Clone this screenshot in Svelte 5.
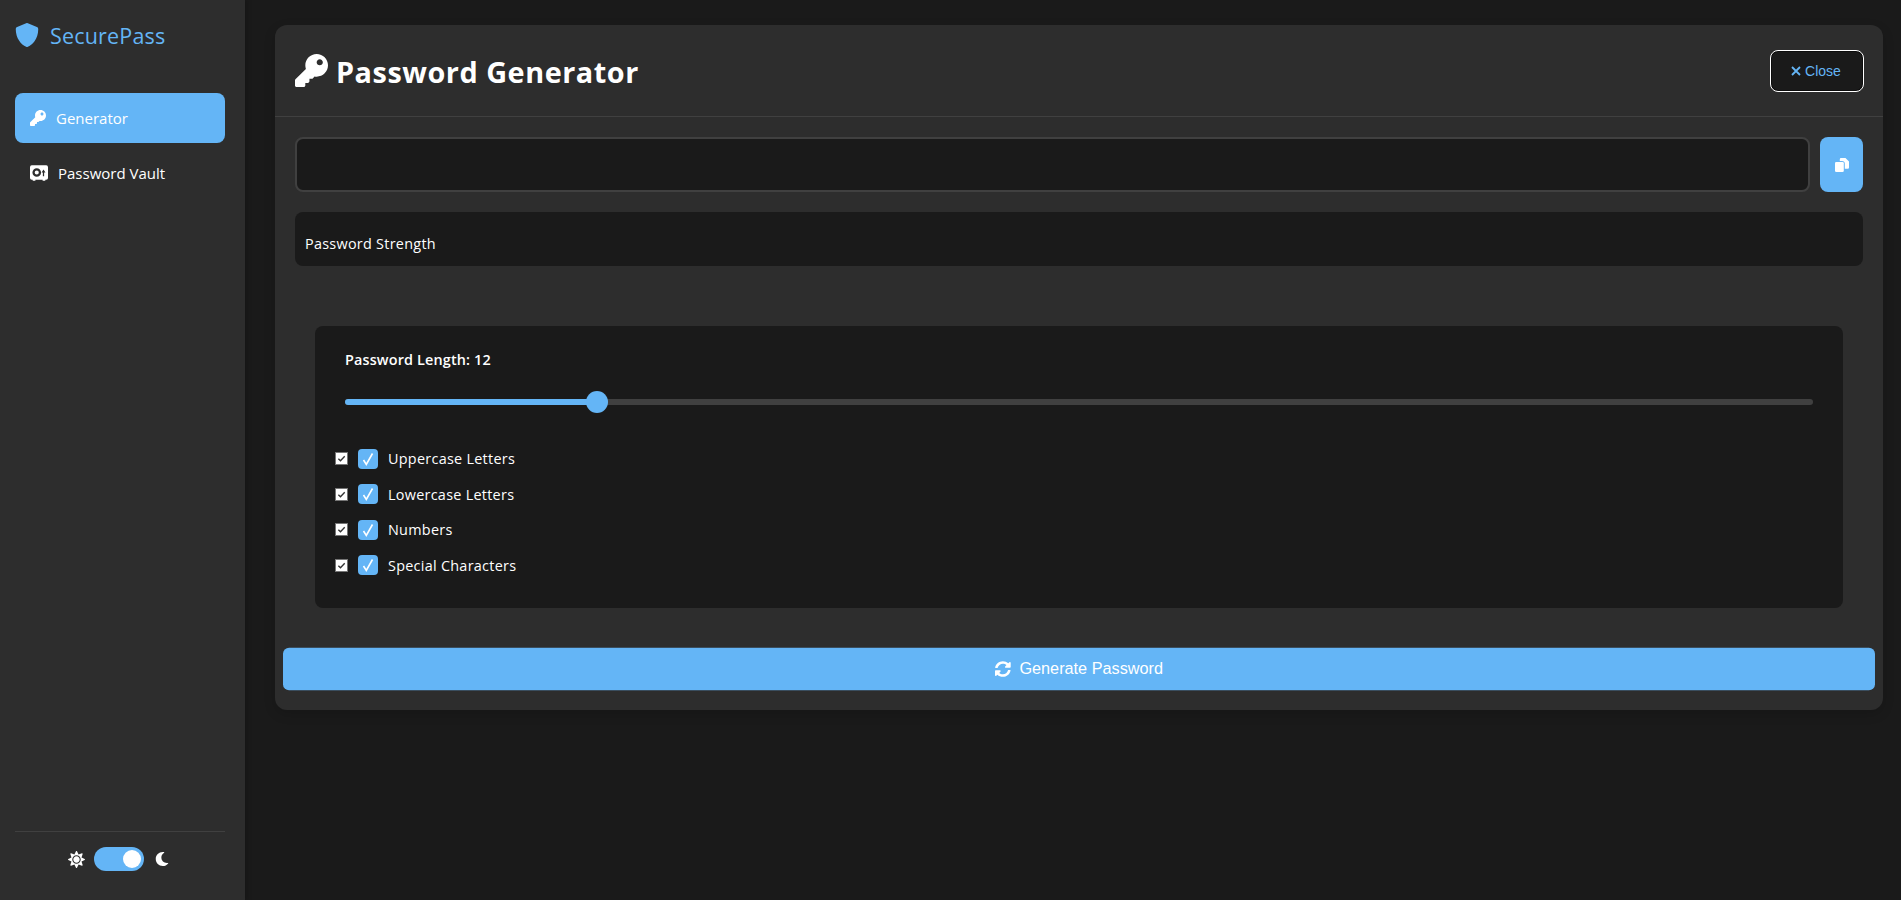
<script>
  const sections = ['Uppercase Letters', 'Lowercase Letters', 'Numbers', 'Special Characters'];
  const key = 'M512 176.001C512 273.203 433.202 352 336 352c-11.22 0-22.19-1.062-32.827-3.069l-24.012 27.014A23.999 23.999 0 0 1 261.223 384H224v40c0 13.255-10.745 24-24 24h-40v40c0 13.255-10.745 24-24 24H24c-13.255 0-24-10.745-24-24v-78.059c0-6.365 2.529-12.47 7.029-16.971l161.802-161.802C163.108 213.814 160 195.271 160 176 160 78.798 238.797.001 335.999 0 433.488-.001 512 78.511 512 176.001zM336 128c0 26.51 21.49 48 48 48s48-21.49 48-48-21.49-48-48-48-48 21.49-48 48z';
</script>

<div class="layout">
  <aside class="sidebar">
    <div class="logo">
      <svg class="shield" viewBox="0 0 512 512"><path d="M466.5 83.7l-192-80a48.15 48.15 0 0 0-36.9 0l-192 80C27.7 91.1 16 108.6 16 128c0 198.5 114.5 335.7 221.5 380.3 11.8 4.9 25.1 4.9 36.9 0C360.1 472.6 496 349.3 496 128c0-19.4-11.7-36.9-29.5-44.3z"/></svg>
      <span>SecurePass</span>
    </div>
    <nav class="nav">
      <div class="nav-item active">
        <svg class="nav-icon" viewBox="0 0 512 512"><path d={key}/></svg>
        <span>Generator</span>
      </div>
      <div class="nav-item">
        <svg class="vault-icon" viewBox="0 0 20 17">
          <path fill-rule="evenodd" d="M2 0h16a2 2 0 0 1 2 2v12a2 2 0 0 1-2 2h-1v1h-3v-1H6v1H3v-1H2a2 2 0 0 1-2-2V2a2 2 0 0 1 2-2zM7.5 3.2a4.8 4.8 0 1 0 0 9.6 4.8 4.8 0 0 0 0-9.600zM7.5 5.700a2.300 2.300 0 1 1 0 4.600 2.300 2.300 0 0 1 0-4.600zM15 4.500 12.800 8H14.300v4h1.400V8h1.500z"/>
        </svg>
        <span>Password Vault</span>
      </div>
    </nav>
    <div class="theme">
      <svg class="sun" viewBox="0 0 512 512"><path d="M256 160c-52.9 0-96 43.1-96 96s43.1 96 96 96 96-43.1 96-96-43.1-96-96-96zm246.4 80.5l-94.7-47.3 33.5-100.4c4.5-13.6-8.4-26.5-21.9-21.9l-100.4 33.5-47.4-94.8c-6.4-12.8-24.6-12.8-31 0l-47.3 94.7L92.7 70.8c-13.6-4.5-26.5 8.4-21.9 21.9l33.5 100.4-94.7 47.4c-12.8 6.4-12.8 24.6 0 31l94.7 47.3-33.5 100.5c-4.5 13.6 8.4 26.5 21.9 21.9l100.4-33.5 47.3 94.7c6.4 12.8 24.600 12.8 31 0l47.3-94.7 100.4 33.5c13.6 4.5 26.5-8.4 21.9-21.9l-33.5-100.4 94.7-47.3c13-6.5 13-24.7.2-31.100zm-155.900 106c-49.900 49.900-131.100 49.900-181 0-49.900-49.900-49.900-131.100 0-181 49.900-49.900 131.100-49.900 181 0 49.900 49.900 49.900 131.100 0 181z"/></svg>
      <div class="toggle"><div class="knob"></div></div>
      <svg class="moon" viewBox="0 0 512 512"><path d="M283.211 512c78.962 0 151.079-35.925 198.857-94.792 7.068-8.708-.639-21.43-11.562-19.35-124.203 23.654-238.262-71.576-238.262-196.954 0-72.222 38.662-138.635 101.498-174.394 9.686-5.512 7.25-20.197-3.756-22.23A258.156 258.156 0 0 0 283.211 0c-141.309 0-256 114.511-256 256 0 141.309 114.511 256 256 256z"/></svg>
    </div>
  </aside>

  <main class="main">
    <section class="card">
      <header class="card-head">
        <h1><svg class="title-icon" viewBox="0 0 512 512"><path d={key}/></svg><span class="title-text">Password Generator</span></h1>
        <button class="close">
          <svg class="x" viewBox="0 0 10 10"><path d="M1 1 9 9M9 1 1 9"/></svg>
          Close
        </button>
      </header>
      <div class="body">
        <div class="output-row">
          <div class="output"></div>
          <button class="copy" aria-label="Copy">
            <svg class="copy-icon" viewBox="0 0 14 14">
              <path d="M6 0h4.500L14 3.500V9.500a1.200 1.200 0 0 1-1.200 1.200H9.800V5.800A2.800 2.800 0 0 0 7 3H4.800V1.200A1.200 1.200 0 0 1 6 0z"/>
              <rect x="0" y="4" width="8.800" height="10" rx="1.300"/>
            </svg>
          </button>
        </div>
        <div class="strength">Password Strength</div>
        <div class="options">
          <div class="length-label">Password Length: 12</div>
          <div class="slider">
            <div class="fill"></div>
            <div class="thumb"></div>
          </div>
          <div class="checks">
            {#each sections as s}
              <label class="check">
                <span class="native">
                  <svg viewBox="0 0 13 13"><path d="M2.800 6.800 5.300 9.200 10.300 3.800" /></svg>
                </span>
                <span class="custom">
                  <svg viewBox="0 0 20 20"><path d="M5.500 11 8.300 15.500 14.500 4.500" /></svg>
                </span>
                <span class="check-text">{s}</span>
              </label>
            {/each}
          </div>
        </div>
      </div>
      <div class="gen-wrap">
        <button class="generate">
          <svg class="sync" viewBox="0 0 512 512"><path d="M370.72 133.28C339.458 104.008 298.888 87.962 255.848 88c-77.458.068-144.328 53.178-162.791 126.85-1.344 5.363-6.122 9.15-11.651 9.15H24.103c-7.498 0-13.194-6.807-11.807-14.176C33.933 94.924 134.813 8 256 8c66.448 0 126.791 26.136 171.315 68.685L463.03 40.97C478.149 25.851 504 36.559 504 57.941V192c0 13.255-10.745 24-24 24H345.941c-21.382 0-32.09-25.851-16.971-40.971l41.75-41.749zM32 296h134.059c21.382 0 32.09 25.851 16.971 40.971l-41.75 41.75c31.262 29.273 71.835 45.319 114.876 45.28 77.418-.07 144.315-53.144 162.787-126.849 1.344-5.363 6.122-9.15 11.651-9.15h57.304c7.498 0 13.194 6.807 11.807 14.176C478.067 417.076 377.187 504 256 504c-66.448 0-126.791-26.136-171.315-68.685L48.97 471.03C33.851 486.149 8 475.441 8 454.059V320c0-13.255 10.745-24 24-24z"/></svg>
          Generate Password
        </button>
      </div>
    </section>
  </main>
</div>

<style>
  :global(body) {
    margin: 0;
    background: #1a1a1a;
    font-family: "Open Sans", "Noto Sans", sans-serif;
    color: #fff;
  }
  svg { fill: currentColor; display: block; flex: none; }
  .layout { display: flex; height: 900px; overflow: hidden; }
  .sidebar {
    width: 245px;
    flex: none;
    box-sizing: border-box;
    padding: 0 20px 29px 15px;
    background: #2d2d2d;
    display: flex;
    flex-direction: column;
    box-shadow: 2px 0 5px rgba(0, 0, 0, .2);
  }
  .logo {
    display: flex;
    align-items: center;
    gap: 11px;
    height: 71px;
    color: #64b5f6;
    font-size: 21.500px;
    letter-spacing: .18px;
  }
  .shield { width: 24px; height: 24px; margin-bottom: 2px; }
  .nav { margin-top: 22px; display: flex; flex-direction: column; gap: 5px; }
  .nav-item {
    display: flex;
    align-items: center;
    height: 50px;
    padding: 0 15px;
    border-radius: 8px;
    font-size: 15px;
    gap: 10px;
  }
  .active { background: #64b5f6; }
  .nav-icon { width: 16px; height: 16px; }
  .vault-icon { width: 18px; height: 16px; }
  .theme {
    margin-top: auto;
    border-top: 1px solid #404040;
    padding: 15px 3px 0 0;
    display: flex;
    align-items: center;
    justify-content: center;
    gap: 9px;
  }
  .sun { width: 17px; height: 17px; }
  .moon { width: 14px; height: 14px; margin-left: 2px; }
  .toggle {
    width: 50px;
    height: 24px;
    border-radius: 12px;
    background: #64b5f6;
    display: flex;
    align-items: center;
    justify-content: flex-end;
    padding: 0 3px;
    box-sizing: border-box;
  }
  .knob { width: 18px; height: 18px; border-radius: 50%; background: #fff; }
  .main { flex: 1; padding: 25px 18px 0 30px; min-width: 0; }
  .card {
    background: #2d2d2d;
    border-radius: 12px;
    padding-bottom: 19.800px;
    box-shadow: 0 4px 12px rgba(0, 0, 0, .15);
  }
  .card-head {
    height: 92px;
    box-sizing: border-box;
    border-bottom: 1px solid #404040;
    padding: 0 19px 0 20px;
    display: flex;
    align-items: center;
    justify-content: space-between;
  }
  h1 {
    margin: 0;
    font-size: 28.800px;
    font-weight: 700;
    letter-spacing: .54px;
    display: flex;
    align-items: center;
    gap: 8px;
  }
  .title-icon { width: 33px; height: 33px; }
  .title-text { padding-top: 2px; }
  .close {
    width: 94px;
    height: 42px;
    box-sizing: border-box;
    background: #1a1a1a;
    color: #64b5f6;
    border: 1px solid #fff;
    box-shadow: inset 0 0 0 1px #0d0d0d;
    border-radius: 8px;
    font: 14px "Liberation Sans", Arial, sans-serif;
    display: flex;
    align-items: center;
    justify-content: center;
    gap: 4px;
    padding: 0 2px 0 0;
  }
  .x { width: 10px; height: 10px; fill: none; stroke: currentColor; stroke-width: 1.800; }
  .body { padding: 20px 20px 0; }
  .output-row { display: flex; gap: 10px; }
  .output {
    flex: 1;
    height: 55px;
    box-sizing: border-box;
    background: #1a1a1a;
    border: 2px solid #404040;
    border-radius: 8px;
  }
  .copy {
    width: 43px;
    height: 55px;
    background: #64b5f6;
    color: #fff;
    border: 0;
    border-radius: 8px;
    padding: 0;
    display: flex;
    align-items: center;
    justify-content: center;
  }
  .copy-icon { width: 14px; height: 14px; }
  .strength {
    margin-top: 20px;
    height: 54px;
    box-sizing: border-box;
    background: #1a1a1a;
    border-radius: 8px;
    padding: 21px 10px 0;
    font-size: 14.400px;
    letter-spacing: .28px;
    line-height: 21px;
  }
  .options {
    margin: 60px 20px 0;
    padding: 24px 30px 32px 20px;
    background: #1a1a1a;
    border-radius: 8px;
  }
  .length-label {
    font-size: 14.400px;
    font-weight: 600;
    letter-spacing: .16px;
    line-height: 20px;
    padding-left: 10px;
  }
  .slider {
    position: relative;
    height: 6px;
    margin: 29px 0 0 10px;
    background: #404040;
    border-radius: 3px;
  }
  .fill { width: 252px; height: 6px; background: #64b5f6; border-radius: 3px; }
  .thumb {
    position: absolute;
    left: 241px;
    top: -8px;
    width: 22px;
    height: 22px;
    border-radius: 50%;
    background: #64b5f6;
  }
  .checks { margin-top: 43px; display: flex; flex-direction: column; gap: 14.600px; }
  .check {
    display: flex;
    align-items: center;
    height: 21px;
    font-size: 14.400px;
    letter-spacing: .28px;
  }
  .native {
    width: 13px;
    height: 13px;
    box-sizing: border-box;
    background: #fff;
    border: 1px solid #767676;
    margin-right: 10px;
  }
  .native svg { width: 11px; height: 11px; fill: none; stroke: #333; stroke-width: 1.600; }
  .custom {
    width: 20px;
    height: 20px;
    background: #64b5f6;
    border-radius: 4px;
    margin-right: 10px;
  }
  .custom svg { width: 20px; height: 20px; fill: none; stroke: #fff; stroke-width: 1.600; }
  .gen-wrap { padding: 39.800px 20px 0; }
  .generate {
    width: 100%;
    height: 42.400px;
    background: #64b5f6;
    color: #fff;
    border: 0;
    border-radius: 6px;
    font: 16px "Liberation Sans", Arial, sans-serif;
    display: flex;
    align-items: center;
    justify-content: center;
    gap: 8px;
    transform: scale(1.0153);
  }
  .sync { width: 16px; height: 16px; }
</style>
